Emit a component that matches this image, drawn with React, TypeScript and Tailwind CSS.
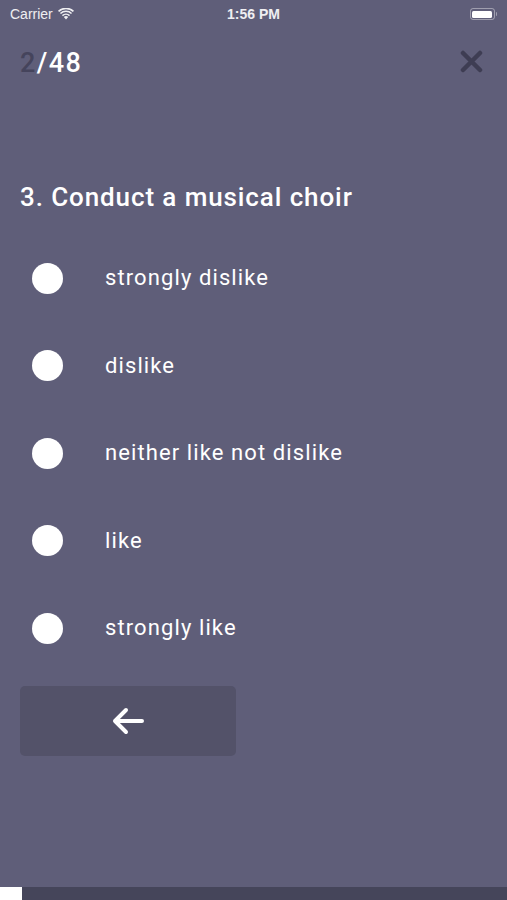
const options = ['strongly dislike', 'dislike', 'neither like not dislike', 'like', 'strongly like'];

const StatusBar = () => (
  <div className="relative flex h-[28px] items-center justify-between px-[10px] text-[14px] text-white/90 font-['Liberation_Sans',sans-serif]">
    <div className="flex items-center gap-[5px]">
      <span>Carrier</span>
      <svg width="16" height="12" viewBox="0 0 16 12" fill="currentColor">
        <path d="M8 11.5 10.2 9a3.2 3.2 0 0 0-4.4 0Z" />
        <path d="M3.9 7.1 5 8.3a4.3 4.3 0 0 1 6 0l1.1-1.2a5.9 5.9 0 0 0-8.2 0Z" />
        <path d="M1.9 4.9 3 6.1a7.1 7.1 0 0 1 10 0l1.1-1.2a8.7 8.7 0 0 0-12.2 0Z" />
        <path d="M0 2.8 1.1 4a10 10 0 0 1 13.8 0L16 2.8a11.6 11.6 0 0 0-16 0Z" />
      </svg>
    </div>
    <span className="absolute left-1/2 -translate-x-1/2 font-semibold">1:56 PM</span>
    <div className="flex items-center">
      <div className="flex h-[12px] w-[25px] items-center rounded-[3px] border border-white/40 p-[1.5px]">
        <div className="h-full w-full rounded-[1.5px] bg-white" />
      </div>
      <div className="ml-[1px] h-[4px] w-[1.5px] rounded-r bg-white/40" />
    </div>
  </div>
);

export default function App() {
  return (
    <div className="flex h-[900px] w-[507px] flex-col bg-[#5f5e79] font-['Roboto',sans-serif] text-white">
      <StatusBar />

      <div className="flex items-center justify-between pl-[20px] pr-[24px] pt-[23px]">
        <div className="text-[27px] font-medium leading-[25px] tracking-[1.4px]">
          <span className="text-[#45445c]">2</span>
          <span>/48</span>
        </div>
        <svg width="23" height="23" viewBox="0 0 23 23" className="-mt-[4px] text-[#3e3d53]">
          <path d="M3 3 20 20M20 3 3 20" stroke="currentColor" strokeWidth="4.5" strokeLinecap="round" />
        </svg>
      </div>

      <h1 className="mt-[106px] px-[20px] text-[26px] font-medium leading-[30px] tracking-[0.9px]">
        3. Conduct a musical choir
      </h1>

      <div className="mt-[51px] flex flex-col gap-[57.6px]">
        {options.map((label) => (
          <div key={label} className="flex h-[30px] items-center pl-[32px]">
            <div className="h-[31px] w-[31px] shrink-0 rounded-full bg-white" />
            <span className="ml-[42px] text-[22px] leading-none tracking-[1.1px]">{label}</span>
          </div>
        ))}
      </div>

      <button className="ml-[20px] mt-[43px] flex h-[70px] w-[216px] items-center justify-center rounded-[5px] bg-[#535269]">
        <svg width="34" height="28" viewBox="0 0 34 28" className="text-white">
          <path d="M31 14H4M15 3 4 14l11 11" fill="none" stroke="currentColor" strokeWidth="4" strokeLinecap="round" strokeLinejoin="round" />
        </svg>
      </button>

      <div className="mt-auto flex h-[13px] bg-[#45455a]">
        <div className="h-full w-[22px] bg-white" />
      </div>
    </div>
  );
}
